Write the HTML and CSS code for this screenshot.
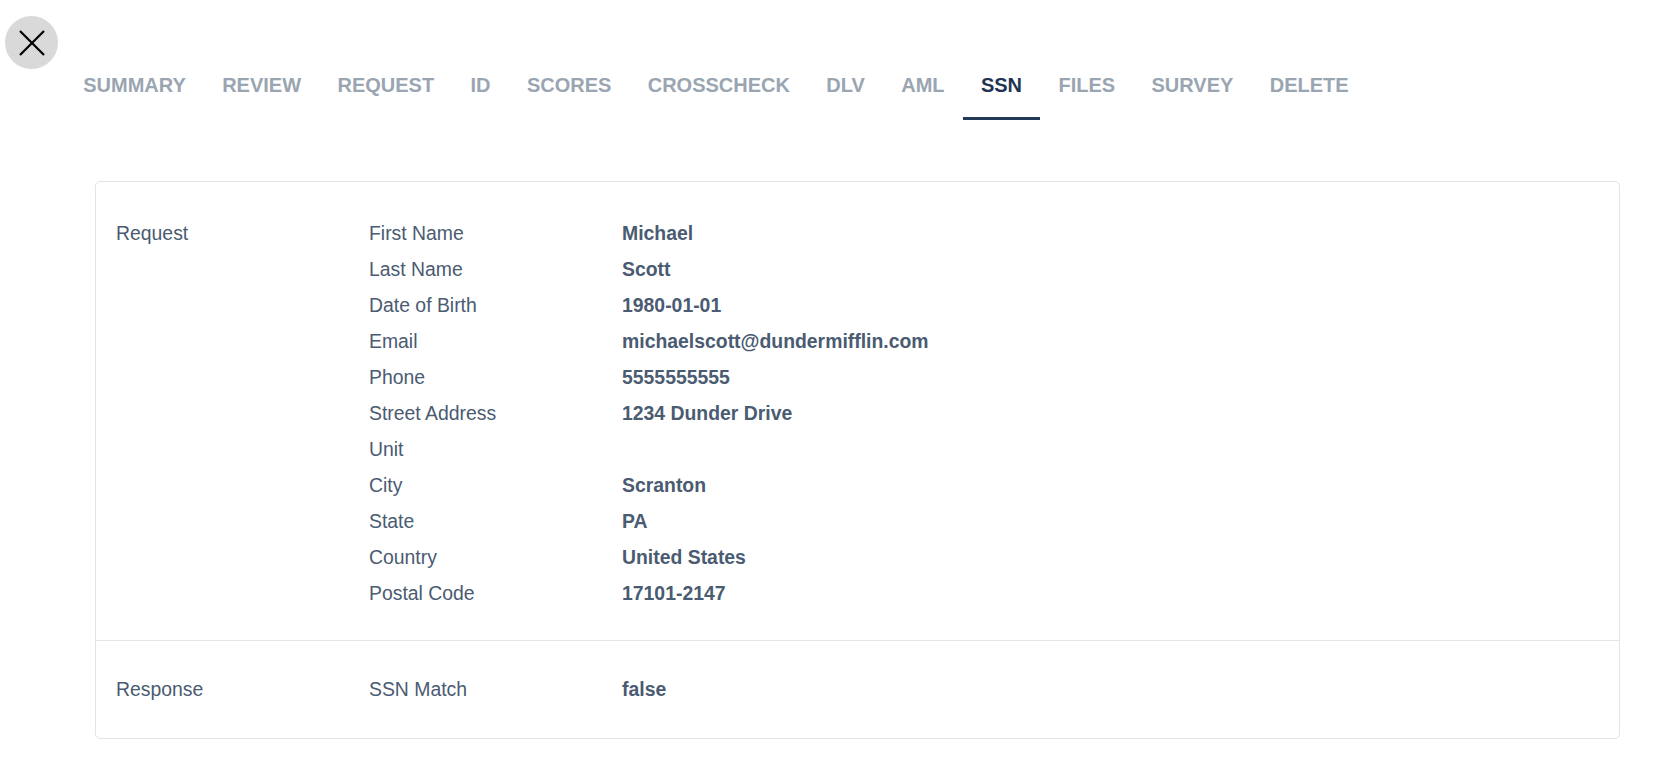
FILE: index.html
```html
<!DOCTYPE html>
<html lang="en">
<head>
	<meta charset="UTF-8">
	<title>SSN</title>
	<link rel="stylesheet" href="styles.css">
</head>
<body>
	<div class="page">
		<button class="close" type="button" aria-label="Close">
			<svg width="26" height="26" viewBox="0 0 26 26"><path d="M1 1L25 25M25 1L1 25" stroke="#000" stroke-width="2.2" fill="none"/></svg>
		</button>
		<nav class="tabs">
			<a class="tab">Summary</a>
			<a class="tab">Review</a>
			<a class="tab">Request</a>
			<a class="tab">ID</a>
			<a class="tab">Scores</a>
			<a class="tab">Crosscheck</a>
			<a class="tab">DLV</a>
			<a class="tab">AML</a>
			<a class="tab active">SSN</a>
			<a class="tab">Files</a>
			<a class="tab">Survey</a>
			<a class="tab">Delete</a>
		</nav>
		<div class="card">
			<section class="group">
				<h3 class="group_title">Request</h3>
				<dl class="fields">
					<dt>First Name</dt><dd>Michael</dd>
					<dt>Last Name</dt><dd>Scott</dd>
					<dt>Date of Birth</dt><dd>1980-01-01</dd>
					<dt>Email</dt><dd>michaelscott@dundermifflin.com</dd>
					<dt>Phone</dt><dd>5555555555</dd>
					<dt>Street Address</dt><dd>1234 Dunder Drive</dd>
					<dt>Unit</dt><dd></dd>
					<dt>City</dt><dd>Scranton</dd>
					<dt>State</dt><dd>PA</dd>
					<dt>Country</dt><dd>United States</dd>
					<dt>Postal Code</dt><dd>17101-2147</dd>
				</dl>
			</section>
			<section class="group">
				<h3 class="group_title">Response</h3>
				<dl class="fields">
					<dt>SSN Match</dt><dd>false</dd>
				</dl>
			</section>
		</div>
	</div>
</body>
</html>
```

FILE: styles.css
```css
* {margin:0; padding:0; box-sizing:border-box;}
body {background:#fff; font:19.4px/36px "Liberation Sans", Arial, Helvetica, sans-serif; color:#4a5b72;}
.page {padding:16px 36px 32px 0;}

/* round close button, top left */
.close {display:flex; align-items:center; justify-content:center; width:53px; height:53px; margin-left:5px; border:0; border-radius:50%; background:#d9d9d9; cursor:pointer;}

/* tab strip */
.tabs {display:flex; margin:5px 0 0 65px;}
.tab {display:block; padding:0 18.2px 20px; font-size:20px; line-height:23px; font-weight:700; text-transform:uppercase; color:#9aa5b2; border-bottom:3px solid transparent; cursor:pointer;}
.tab.active {color:#1f3453; border-bottom-color:#233a58;}

/* detail card */
.card {margin:61px 0 0 95px; border:1px solid #e3e3e3; border-radius:5px;}
.group {display:grid; grid-template-columns:253px 1fr; padding:33px 20px 29px;}
.group + .group {border-top:1px solid #e5e5e5; padding:30px 20px 31px;}
.group_title {font-size:inherit; font-weight:400;}
.fields {display:grid; grid-template-columns:253px 1fr; grid-auto-rows:36px;}
.fields dd {font-weight:700;}
```
